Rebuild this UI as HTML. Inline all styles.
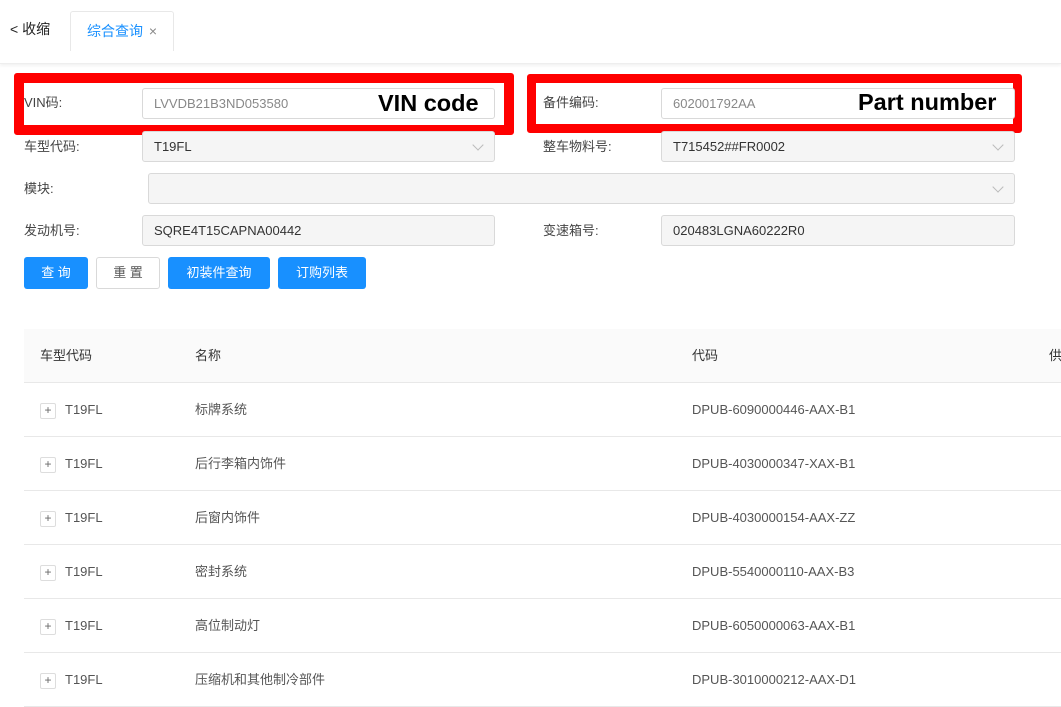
<!DOCTYPE html>
<html><head><meta charset="utf-8"><style>
*{margin:0;padding:0;box-sizing:border-box}
body{width:1061px;height:684px;overflow:hidden;background:#fff;font-family:"Liberation Sans","Noto Sans CJK SC",sans-serif;font-size:13px;line-height:18px;color:#333;position:relative}
.a{position:absolute}
.lbl{position:absolute;font-size:13px;color:#444;line-height:18px}
.inp{position:absolute;height:31px;border:1px solid #d9d9d9;border-radius:3px;background:#f5f5f5;padding-left:11px;padding-top:6px;line-height:18px;font-size:13px;color:#333}
.w{background:#fff;color:#888}
.chev{position:absolute;right:12px;top:9px;width:8px;height:8px;border-right:1px solid #bbb;border-bottom:1px solid #bbb;transform:rotate(45deg)}
.red{position:absolute;border:10px solid #f00;border-radius:3px}
.btn{position:absolute;top:257px;height:32px;border-radius:3px;background:#1890ff;color:#fff;text-align:center;padding-top:7px;line-height:18px;font-size:13px}
.row{position:absolute;left:24px;width:1037px;height:54px;border-bottom:1px solid #e8e8e8}
.row span{position:absolute;top:18px;line-height:18px;color:#555}
.plus{position:absolute;left:16px;top:20px;width:16px;height:16px;border:1px solid #ddd;border-radius:2px;font-size:12px;line-height:13px;text-align:center;color:#666}
</style></head><body>
<div class="a" style="left:0;top:0;width:1061px;height:64px;border-bottom:1px solid #eee;box-shadow:0 2px 3px #f3f3f3"></div>
<div class="a" style="left:10px;top:20px;font-size:14px;color:#222">&lt; 收缩</div>
<div class="a" style="left:70px;top:11px;width:104px;height:40px;border:1px solid #e8e8e8;border-bottom:none;border-radius:3px 3px 0 0;background:#fff"></div>
<div class="a" style="left:87px;top:22px;font-size:14px;color:#1890ff">综合查询 <span style="color:#888;margin-left:2px">×</span></div>

<div class="red" style="left:14px;top:73px;width:500px;height:62px"></div>
<div class="red" style="left:527px;top:74px;width:495px;height:59px;border-width:9px"></div>

<div class="lbl" style="left:24px;top:94px">VIN码:</div>
<div class="inp w" style="left:142px;top:88px;width:353px">LVVDB21B3ND053580</div>
<div class="a" style="left:378px;top:89px;font-size:23.5px;line-height:28px;font-weight:bold;color:#000">VIN code</div>
<div class="lbl" style="left:543px;top:94px">备件编码:</div>
<div class="inp w" style="left:661px;top:88px;width:354px">602001792AA</div>
<div class="a" style="left:858px;top:88px;font-size:23.5px;line-height:28px;font-weight:bold;color:#000">Part number</div>

<div class="lbl" style="left:24px;top:138px">车型代码:</div>
<div class="inp" style="left:142px;top:131px;width:353px">T19FL<div class="chev"></div></div>
<div class="lbl" style="left:543px;top:138px">整车物料号:</div>
<div class="inp" style="left:661px;top:131px;width:354px">T715452##FR0002<div class="chev"></div></div>

<div class="lbl" style="left:24px;top:180px">模块:</div>
<div class="inp" style="left:148px;top:173px;width:867px"><div class="chev"></div></div>

<div class="lbl" style="left:24px;top:222px">发动机号:</div>
<div class="inp" style="left:142px;top:215px;width:353px">SQRE4T15CAPNA00442</div>
<div class="lbl" style="left:543px;top:222px">变速箱号:</div>
<div class="inp" style="left:661px;top:215px;width:354px">020483LGNA60222R0</div>

<div class="btn" style="left:24px;width:64px">查 询</div>
<div class="btn" style="left:96px;width:64px;background:#fff;border:1px solid #d9d9d9;color:#555;padding-top:6px">重 置</div>
<div class="btn" style="left:168px;width:102px">初装件查询</div>
<div class="btn" style="left:278px;width:88px">订购列表</div>

<div class="row" style="top:329px;background:#fafafa"><span style="left:16px;color:#333">车型代码</span><span style="left:171px;color:#333">名称</span><span style="left:668px;color:#333">代码</span><span style="left:1025px;color:#333">供</span></div>
<div class="row" style="top:383px"><div class="plus">+</div><span style="left:41px">T19FL</span><span style="left:171px">标牌系统</span><span style="left:668px">DPUB-6090000446-AAX-B1</span></div>
<div class="row" style="top:437px"><div class="plus">+</div><span style="left:41px">T19FL</span><span style="left:171px">后行李箱内饰件</span><span style="left:668px">DPUB-4030000347-XAX-B1</span></div>
<div class="row" style="top:491px"><div class="plus">+</div><span style="left:41px">T19FL</span><span style="left:171px">后窗内饰件</span><span style="left:668px">DPUB-4030000154-AAX-ZZ</span></div>
<div class="row" style="top:545px"><div class="plus">+</div><span style="left:41px">T19FL</span><span style="left:171px">密封系统</span><span style="left:668px">DPUB-5540000110-AAX-B3</span></div>
<div class="row" style="top:599px"><div class="plus">+</div><span style="left:41px">T19FL</span><span style="left:171px">高位制动灯</span><span style="left:668px">DPUB-6050000063-AAX-B1</span></div>
<div class="row" style="top:653px"><div class="plus">+</div><span style="left:41px">T19FL</span><span style="left:171px">压缩机和其他制冷部件</span><span style="left:668px">DPUB-3010000212-AAX-D1</span></div>
</body></html>
